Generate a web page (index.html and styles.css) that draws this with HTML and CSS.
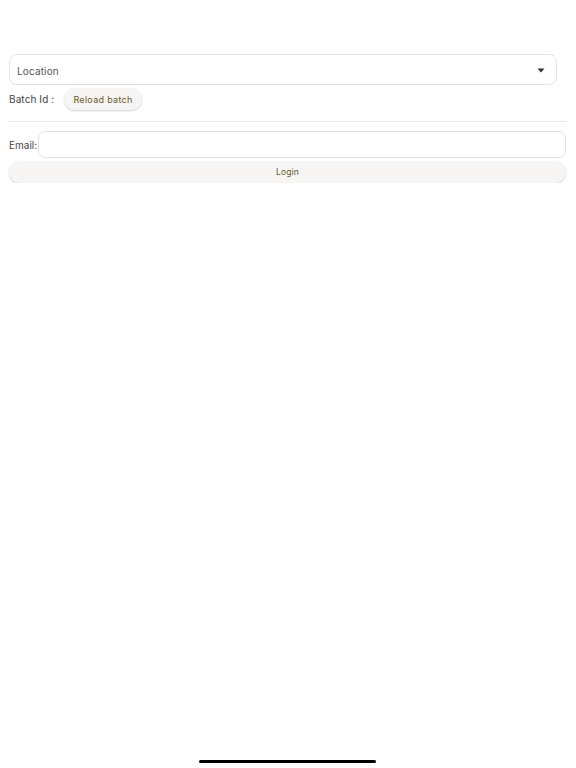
FILE: index.html
```html
<!DOCTYPE html>
<html>
<head>
<meta charset="utf-8">
<link rel="stylesheet" href="styles.css">
</head>
<body>
<div class="page">
  <div class="select">
    <span class="select-label">Location</span>
    <svg class="caret" width="8" height="5" viewBox="0 0 8 5"><path d="M0.5 0.5 H7.5 L4 4.5 Z" fill="#333"/></svg>
  </div>
  <div class="batch-row">
    <span class="batch-label">Batch Id :</span>
    <button class="pill">Reload batch</button>
  </div>
  <div class="divider"></div>
  <div class="email-row">
    <span class="email-label">Email:</span>
    <div class="input"></div>
  </div>
  <button class="login">Login</button>
</div>
<div class="home-bar"></div>
</body>
</html>
```
FILE: styles.css
```css
html, body {
  margin: 0;
  padding: 0;
  background: #ffffff;
  font-family: Inter, Roboto, "Noto Sans", sans-serif;
  color: #3c3c3c;
}
.page {
  padding: 54px 10px 0 9px;
  display: flex;
  flex-direction: column;
}
.select {
  height: 31px;
  box-sizing: border-box;
  border: 1px solid #e2e2e2;
  border-radius: 8px;
  margin-right: 9px;
  padding: 0 11px 0 7px;
  display: flex;
  align-items: center;
  justify-content: space-between;
}
.select-label {
  font-size: 10px;
  letter-spacing: 0.15px;
  color: #555;
  padding-top: 2px;
}
.caret { display: block; margin-top: 1px; }
.batch-row {
  margin-top: 3px;
  display: flex;
  align-items: center;
  height: 22px;
}
.batch-label {
  font-size: 10px;
  letter-spacing: 0.1px;
  color: #444;
  width: 55px;
  flex: none;
}
.pill {
  width: 78px;
  height: 22px;
  border: none;
  border-radius: 11px;
  background: #f6f5f3;
  box-shadow: 0 1px 2px rgba(0,0,0,0.18);
  font-family: inherit;
  font-size: 9px;
  letter-spacing: 0.3px;
  font-weight: 400;
  color: #66582a;
  padding: 0;
}
.divider {
  margin-top: 11px;
  height: 1px;
  background: #e8e8e8;
}
.email-row {
  margin-top: 9px;
  display: flex;
  align-items: center;
}
.email-label {
  font-size: 10px;
  color: #444;
  width: 29px;
  flex: none;
}
.input {
  flex: 1;
  height: 27px;
  box-sizing: border-box;
  border: 1px solid #e2e2e2;
  border-radius: 7px;
}
.login {
  margin-top: 3px;
  height: 22px;
  border: none;
  border-radius: 11px;
  background: #f6f5f3;
  box-shadow: 0 1px 2px rgba(0,0,0,0.18);
  font-family: inherit;
  font-size: 8.5px;
  letter-spacing: 0.2px;
  color: #66582a;
  padding: 0;
}
.home-bar {
  position: fixed;
  left: 199px;
  top: 760px;
  width: 177px;
  height: 3px;
  border-radius: 2px;
  background: #000;
}
```
